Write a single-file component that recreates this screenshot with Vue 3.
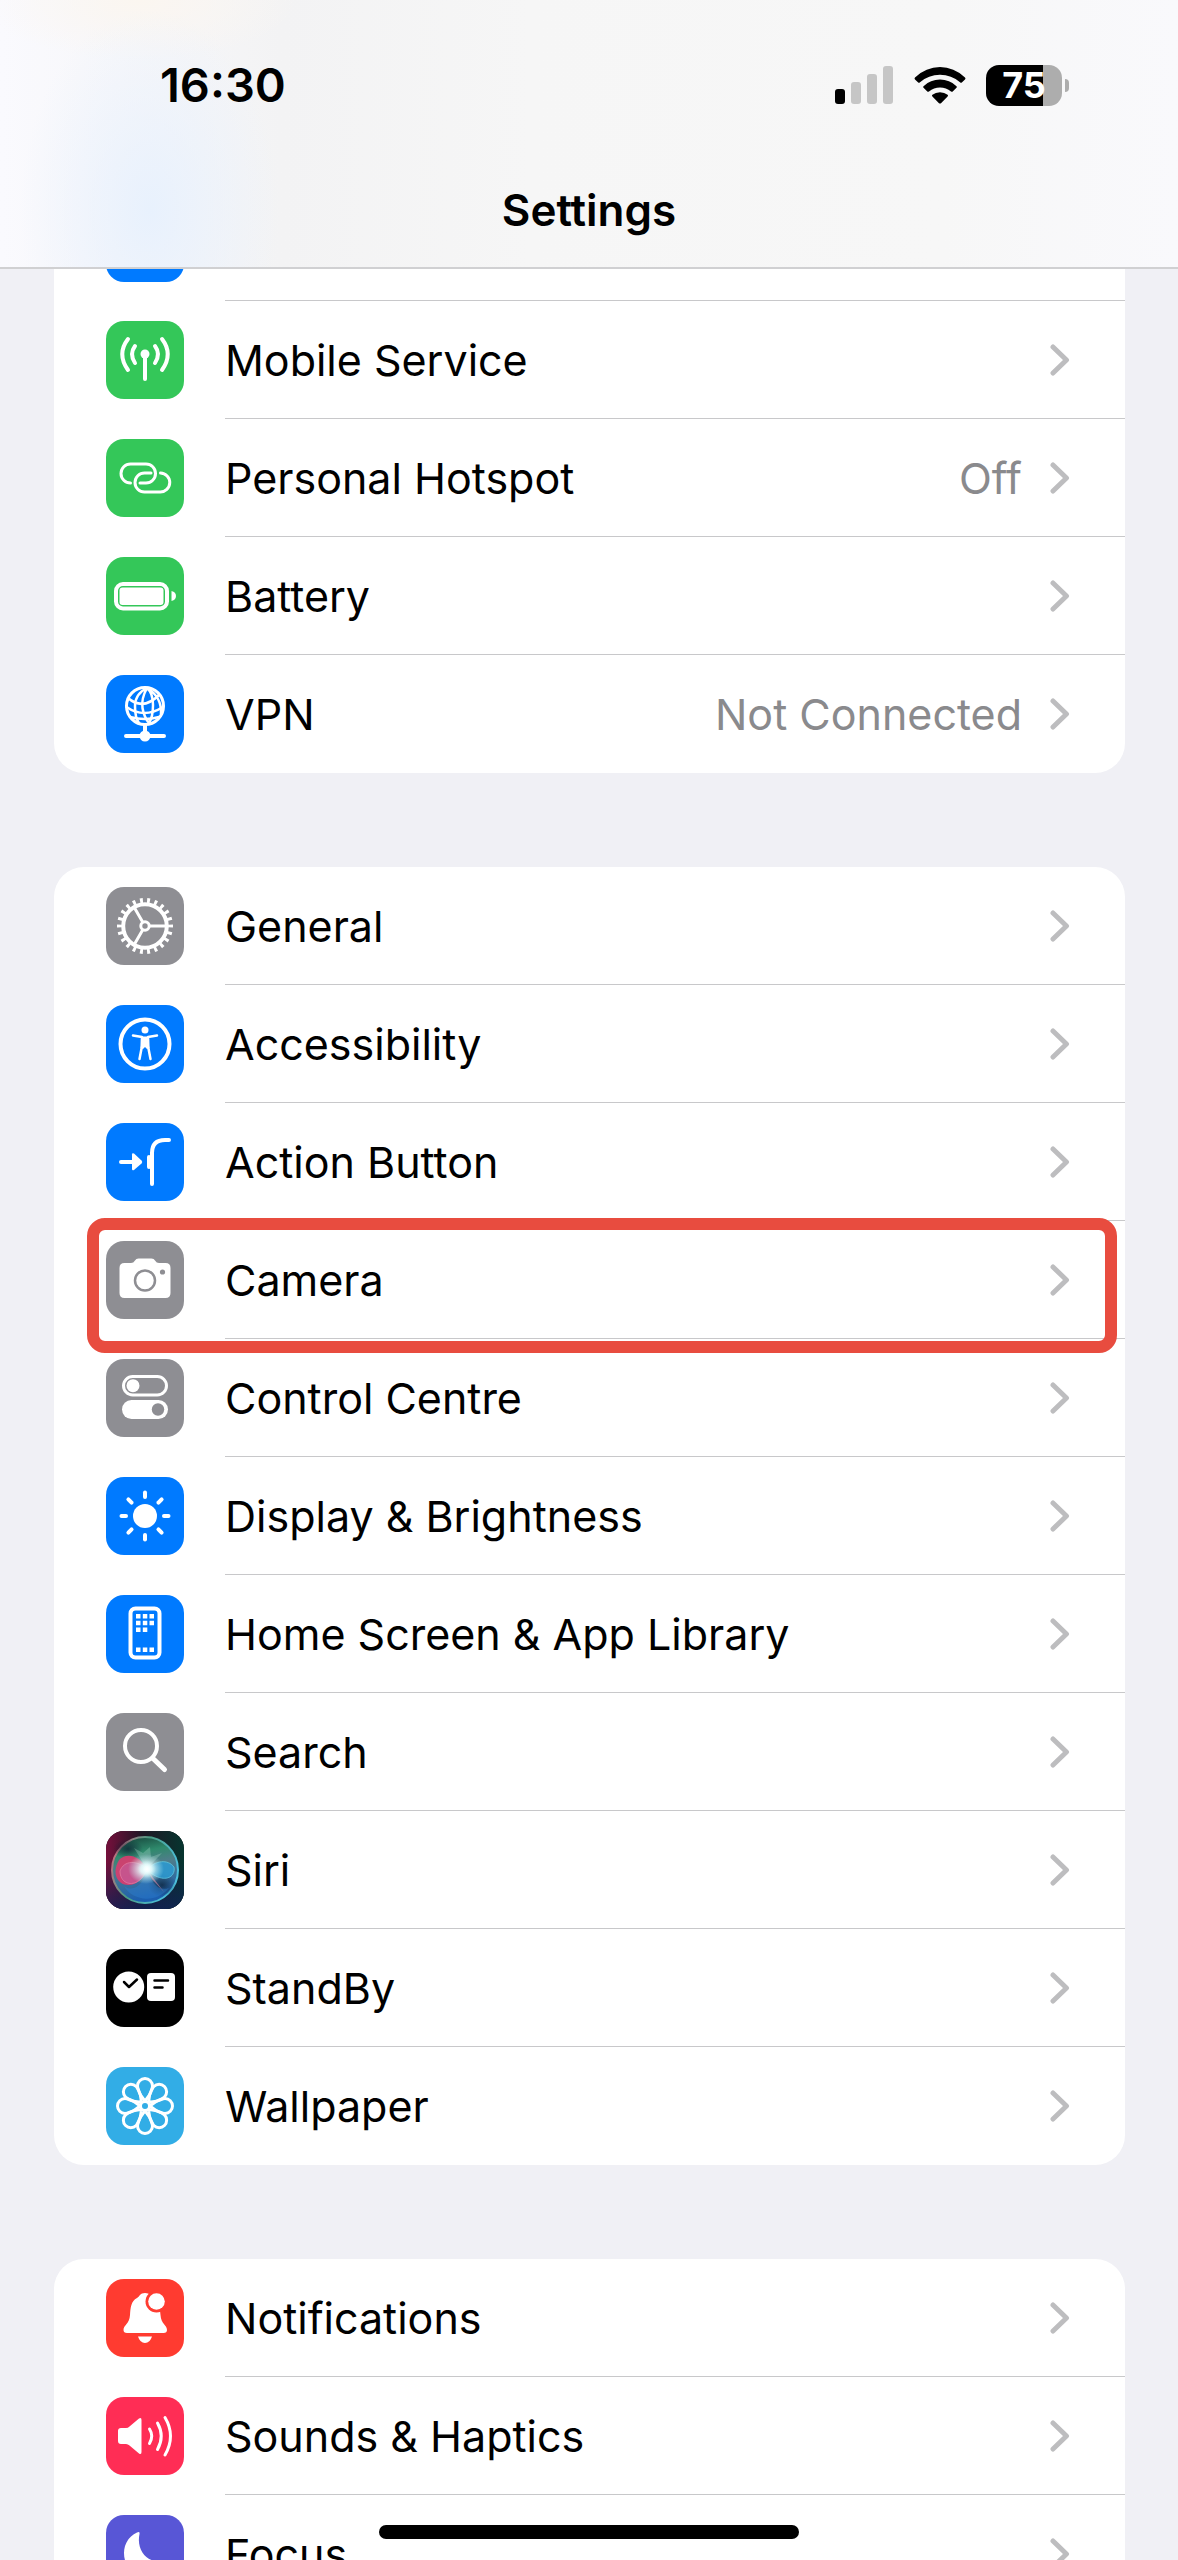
<template>
  <div class="screen">
    <header class="top-bar">
      <div class="status-bar">
        <time class="clock">16:30</time>
        <div class="indicators">
          <svg class="signal" viewBox="0 0 59 38" aria-hidden="true">
            <rect x="0" y="23" width="10" height="15" rx="3" />
            <rect class="dim" x="16" y="16" width="10" height="22" rx="3" />
            <rect class="dim" x="32" y="8" width="10" height="30" rx="3" />
            <rect class="dim" x="48" y="0" width="10" height="38" rx="3" />
          </svg>
          <svg class="wifi" viewBox="0 0 52 38" aria-hidden="true">
            <path d="M1 11.5Q0 12.5 1 13.5L4.200 16.500Q5 17.200 6 16.300Q14.500 8.800 26 8.800T46 16.300Q47 17.200 47.800 16.500L51 13.500Q52 12.500 51 11.500Q40 1 26 1T1 11.500Z" />
            <path d="M9.500 20.200Q8.700 21 9.500 21.800L13.300 25.500Q14 26.200 15 25.400Q19.800 21.400 26 21.400T37 25.400Q38 26.200 38.700 25.500L42.500 21.800Q43.300 21 42.500 20.200Q35.500 13.600 26 13.600T9.500 20.200Z" />
            <path d="M18.400 28.800Q17.500 29.600 18.400 30.500L25 37.200Q26 38 27 37.200L33.600 30.500Q34.500 29.600 33.600 28.800Q30.500 26.200 26 26.200T18.400 28.800Z" />
          </svg>
          <div class="battery"><span class="battery-level">75</span></div>
        </div>
      </div>
      <h1 class="title">Settings</h1>
    </header>

    <main class="content">
      <section v-for="(group, index) in groups" :key="index" class="group">
        <div v-if="index === 0" class="row-edge">
          <span class="icon blue"></span>
          <span class="row-edge-line"></span>
        </div>
        <a v-for="item in group" :key="item.icon" href="#" class="row" :class="{ marked: item.marked }">
          <span class="icon" :class="item.color">
            <svg viewBox="0 0 78 78" aria-hidden="true">
              <g v-if="item.icon === 'mobile'" class="line">
                <path d="M39 35V58" />
                <path d="M22 18Q10.500 33 22 49M29 25Q23 33 29 42M56 18Q67.500 33 56 49M49 25Q55 33 49 42" />
                <circle class="solid" cx="39" cy="33" r="4.500" />
              </g>
              <g v-else-if="item.icon === 'hotspot'" class="line mid">
                <path d="M24.500 44A9.500 9.500 0 0 1 24.500 25H40A9.500 9.500 0 0 1 40 44H34" />
                <path d="M45 34H38.500A9.500 9.500 0 0 0 38.500 53H54A9.500 9.500 0 0 0 54.500 34" />
              </g>
              <g v-else-if="item.icon === 'battery'">
                <rect class="line" x="10" y="27" width="51" height="24.500" rx="7" />
                <rect class="solid" x="13.500" y="30.500" width="44" height="17.500" rx="3" />
                <path class="solid" d="M65.500 34Q70 35 70 39T65.500 44Z" />
              </g>
              <g v-else-if="item.icon === 'vpn'" class="line">
                <circle class="mid" cx="39" cy="31" r="18.500" />
                <path class="fine" d="M41 13Q29 19 29 31T33 48M41 13Q35 24 36.500 33T43 48M41 13Q47 18 47 30T43 48M41 13Q56 22 55 39" />
                <path class="fine" d="M22 23Q37 36 53 20M20.500 32Q38 44 57 32M24 42Q39 46 53 42" />
                <path d="M39 50V56M20 61H58" />
                <circle class="solid" cx="39" cy="61" r="5.500" />
              </g>
              <g v-else-if="item.icon === 'general'" class="line">
                <circle cx="39" cy="39" r="21.800" />
                <circle class="teeth" cx="39" cy="39" r="25.500" pathLength="220" />
                <circle class="mid" cx="39" cy="39" r="4.200" />
                <path class="mid" d="M44 39H61M36.500 34.700L28 20M36.500 43.300L28 58" />
              </g>
              <g v-else-if="item.icon === 'accessibility'" class="line">
                <circle cx="39" cy="39" r="24.500" />
                <circle class="solid" cx="39" cy="25" r="3.500" />
                <path class="fine" d="M27 30.500L36 32V41L33.500 54M51 30.500L42 32V41L44.500 54" />
                <path class="solid" d="M35 31.500H43L43.500 43L41 44L39 42L37 44L34.500 43Z" />
              </g>
              <g v-else-if="item.icon === 'action'" class="line">
                <path d="M15 39H27M63 17H59Q46 17 46 30V61M43 34V44" />
                <path class="solid" d="M26 31.500Q26 29.500 28 30.500L35.500 37.500Q37 39 35.500 40.500L28 47Q26 48 26 46Z" />
              </g>
              <g v-else-if="item.icon === 'camera'">
                <path class="solid" d="M18.500 22H25Q27.500 22 29 19.500Q30 17.500 32.500 17.500H45.500Q48 17.500 49 19.500Q50.500 22 53 22H59.500Q64.500 22 64.500 27V52Q64.500 57 59.500 57H18.500Q13.500 57 13.500 52V27Q13.500 22 18.500 22Z" />
                <circle class="cut-line" cx="39" cy="39.500" r="10" />
                <circle class="cut" cx="56.500" cy="31" r="2.600" />
              </g>
              <g v-else-if="item.icon === 'control'">
                <rect class="line mid" x="17.500" y="17.500" width="43" height="18.500" rx="9.250" />
                <circle class="solid" cx="27" cy="26.700" r="6.500" />
                <rect class="solid" x="16" y="41" width="46" height="19" rx="9.500" />
                <circle class="cut" cx="52" cy="50.500" r="6.200" />
              </g>
              <g v-else-if="item.icon === 'display'" class="line">
                <circle class="solid" cx="39" cy="39" r="12" />
                <path v-for="n in 8" :key="n" d="M39 15.500V20" :transform="`rotate(${n * 45} 39 39)`" />
              </g>
              <g v-else-if="item.icon === 'home'">
                <rect class="line" x="24.500" y="13.500" width="29" height="49" rx="5" />
                <path class="solid" d="M30 19h4.500v4.500h-4.500zM36.800 19h4.500v4.500h-4.500zM43.500 19h4.500v4.500h-4.500zM30 25.800h4.500v4.500h-4.500zM36.800 25.800h4.500v4.500h-4.500zM43.500 25.800h4.500v4.500h-4.500zM30 32.500h4.500v4.500h-4.500zM36.800 32.500h4.500v4.500h-4.500zM30 52.500h4.500v4.500h-4.500zM36.800 52.500h4.500v4.500h-4.500zM43.500 52.500h4.500v4.500h-4.500z" />
              </g>
              <g v-else-if="item.icon === 'search'" class="line">
                <circle cx="35" cy="33" r="16" />
                <path class="thick" d="M47 45.500L58.500 56.500" />
              </g>
              <g v-else-if="item.icon === 'siri'">
                <defs>
                  <linearGradient id="siri-back" x1="0" y1="0" x2="1" y2="0">
                    <stop offset="0" stop-color="#76103c" />
                    <stop offset="0.45" stop-color="#211625" />
                    <stop offset="1" stop-color="#06352f" />
                  </linearGradient>
                  <linearGradient id="siri-floor" x1="0" y1="0" x2="0" y2="1">
                    <stop offset="0.4" stop-color="#102050" stop-opacity="0" />
                    <stop offset="1" stop-color="#102258" stop-opacity="0.8" />
                  </linearGradient>
                  <linearGradient id="siri-rim" x1="0" y1="0" x2="1" y2="0.4">
                    <stop offset="0" stop-color="#e0647f" />
                    <stop offset="0.5" stop-color="#4a9c84" />
                    <stop offset="1" stop-color="#4cc0dc" />
                  </linearGradient>
                  <linearGradient id="siri-ball" x1="0" y1="0" x2="0.2" y2="1">
                    <stop offset="0" stop-color="#123a34" />
                    <stop offset="0.3" stop-color="#2f8a6c" />
                    <stop offset="0.5" stop-color="#4f7d8a" />
                    <stop offset="1" stop-color="#1c5fb0" />
                  </linearGradient>
                  <radialGradient id="siri-shade">
                    <stop offset="0" stop-color="#0a1c30" stop-opacity="0.7" />
                    <stop offset="1" stop-color="#0a1c30" stop-opacity="0" />
                  </radialGradient>
                  <radialGradient id="siri-glow">
                    <stop offset="0" stop-color="#fff" />
                    <stop offset="0.3" stop-color="#f2ffff" stop-opacity="0.9" />
                    <stop offset="1" stop-color="#b8f0f0" stop-opacity="0" />
                  </radialGradient>
                </defs>
                <rect width="78" height="78" fill="url(#siri-back)" />
                <rect width="78" height="78" fill="url(#siri-floor)" />
                <circle cx="39" cy="39" r="33" fill="url(#siri-ball)" stroke="url(#siri-rim)" stroke-width="2" />
                <ellipse cx="56" cy="54" rx="14" ry="12" fill="url(#siri-shade)" />
                <ellipse cx="22" cy="18" rx="15" ry="10" fill="url(#siri-shade)" />
                <path d="M41 38C34 24 20 21 13 29C5 43 12 54 22 54C32 54 38 46 41 38Z" fill="#d93c6e" opacity="0.9" />
                <path d="M41 38C31 29 18 29 14 40C14 56 34 58 41 38Z" fill="#c4609f" stroke="#f0a0c4" stroke-width="0.8" opacity="0.6" />
                <path d="M41 39C49 29 62 28 68 36C70 46 58 54 41 39Z" fill="#2d9bd2" stroke="#65d6ec" stroke-width="0.8" opacity="0.85" />
                <path d="M41 39C36 57 25 61 18 55C27 71 51 72 63 57C51 61 45 50 41 39Z" fill="#2c7fd0" opacity="0.45" />
                <path d="M42 40L58 61L46 48Z" fill="#e88ba5" opacity="0.6" />
                <path d="M41 38L28 17L37 22L44 16L45 26L56 22Z" fill="#c8efe2" opacity="0.25" />
                <ellipse cx="40" cy="38" rx="18" ry="15" fill="url(#siri-glow)" />
                <circle cx="41" cy="38" r="9" fill="url(#siri-glow)" />
              </g>
              <g v-else-if="item.icon === 'standby'">
                <circle class="solid" cx="22.700" cy="38" r="15.500" />
                <rect class="solid" x="41" y="24" width="28" height="28" rx="4" />
                <path class="cut-line" d="M18 33L23 38L31 30.500M48.500 31.500H62M48.500 38.500H56.500" />
              </g>
              <g v-else-if="item.icon === 'wallpaper'" class="line mid">
                <path v-for="n in 8" :key="n" d="M42 37C35 30 31.500 24 31.500 19A7.500 7.500 0 0 1 46.500 19C46.500 24 43 30 36 37" :transform="`rotate(${n * 45} 39 39)`" />
                <circle class="hub" cx="39" cy="39" r="4.500" />
              </g>
              <g v-else-if="item.icon === 'notifications'">
                <path class="solid" d="M39 14C34 14 34 17 31 19C25 22 24.500 29 24 36C23.500 45 17.500 46 17.500 51Q17.500 54 21 54H57.500Q61 54 61 51C61 46 55 45 54.500 36C54 29 53 22 47 19C44 17 44 14 39 14ZM32 57.500H46Q44 64 39 64T32 57.500Z" />
                <circle class="cut" cx="50.500" cy="22.500" r="11" />
                <circle class="solid" cx="50.500" cy="22.500" r="8.300" />
              </g>
              <g v-else-if="item.icon === 'sounds'" class="line mid">
                <path class="solid" d="M15 31H20Q22 31 23.500 29.500L33 21.500Q35.500 20 35.500 23V55Q35.500 58 33 56.500L23.500 48.500Q22 47 20 47H15Q12 47 12 44V34Q12 31 15 31Z" />
                <path d="M43.500 32Q48 39 43.500 46.500M51.500 26Q59 39 51.500 52.500M59 20.500Q70 39 59 58" />
              </g>
              <g v-else-if="item.icon === 'focus'">
                <path class="solid" d="M31 17.500Q34 16 33.500 19C30 36 42 49 56 45.500Q60 44 59 47C52 66 18 64 18 38C18 29 23 21 31 17.500Z" />
              </g>
            </svg>
          </span>
          <span class="row-body">
            <span class="label">{{ item.label }}</span>
            <span v-if="item.value" class="value">{{ item.value }}</span>
            <svg class="chevron" viewBox="0 0 20 32" aria-hidden="true">
              <path d="M3 3L16.500 16L3 29" />
            </svg>
          </span>
        </a>
      </section>
    </main>

    <div class="home-indicator"></div>
  </div>
</template>

<script setup>
const groups = [
  [
    { icon: 'mobile', label: 'Mobile Service', color: 'green' },
    { icon: 'hotspot', label: 'Personal Hotspot', color: 'green', value: 'Off' },
    { icon: 'battery', label: 'Battery', color: 'green' },
    { icon: 'vpn', label: 'VPN', color: 'blue', value: 'Not Connected' }
  ],
  [
    { icon: 'general', label: 'General', color: 'gray' },
    { icon: 'accessibility', label: 'Accessibility', color: 'blue' },
    { icon: 'action', label: 'Action Button', color: 'blue' },
    { icon: 'camera', label: 'Camera', color: 'gray', marked: true },
    { icon: 'control', label: 'Control Centre', color: 'gray' },
    { icon: 'display', label: 'Display & Brightness', color: 'blue' },
    { icon: 'home', label: 'Home Screen & App Library', color: 'blue' },
    { icon: 'search', label: 'Search', color: 'gray' },
    { icon: 'siri', label: 'Siri', color: 'black' },
    { icon: 'standby', label: 'StandBy', color: 'black' },
    { icon: 'wallpaper', label: 'Wallpaper', color: 'cyan' }
  ],
  [
    { icon: 'notifications', label: 'Notifications', color: 'red' },
    { icon: 'sounds', label: 'Sounds & Haptics', color: 'pink' },
    { icon: 'focus', label: 'Focus', color: 'indigo' }
  ]
]
</script>

<style>
body {
  background: #f0f0f5;
}
</style>

<style scoped>
.screen {
  position: relative;
  display: flex;
  flex-direction: column;
  height: 100vh;
  overflow: hidden;
  background: #f0f0f5;
  color: #000;
  font-family: Inter, "Liberation Sans", sans-serif;
}
.top-bar {
  flex: none;
  border-bottom: 2px solid #d0d0d2;
  background:
    radial-gradient(ellipse 130px 200px at 150px 210px, #e8f1fd, transparent),
    radial-gradient(ellipse 160px 60px at 140px 0, #fbf6f0, transparent),
    linear-gradient(90deg, #fafafe, #f3f3f4 24%, #f6f6f6 45%, #f7f7f7 80%, #f9f9fc);
}
.status-bar {
  display: flex;
  align-items: center;
  justify-content: space-between;
  padding: 56px 108px 0 160px;
}
.clock {
  font-size: 47px;
  line-height: 58px;
  font-weight: 600;
}
.indicators {
  display: flex;
  align-items: center;
  gap: 20px;
}
.signal { width: 59px; height: 38px; }
.signal .dim { fill: #c6c6c6; }
.wifi { width: 52px; height: 38px; }
.battery {
  position: relative;
  width: 76px;
  height: 41px;
  margin-right: 8px;
  border-radius: 13px;
  background: linear-gradient(90deg, #000 75%, #adadad 75%);
  text-align: center;
}
.battery::after {
  content: "";
  position: absolute;
  left: 79px;
  top: 14px;
  width: 4px;
  height: 13px;
  border-radius: 0 4px 4px 0;
  background: #adadad;
}
.battery-level {
  color: #fff;
  font-size: 36px;
  line-height: 41px;
  font-weight: 700;
}
.title {
  margin: 0;
  padding: 67px 0 28px;
  font-size: 44px;
  line-height: 58px;
  font-weight: 600;
  text-align: center;
}
.content {
  flex: 1;
  min-height: 0;
  overflow: hidden;
  padding: 0 53px 0 54px;
}
.group {
  margin-bottom: 94px;
  border-radius: 30px;
  background: #fff;
}
.group:first-child { border-radius: 0 0 30px 30px; }
.row-edge {
  display: flex;
  align-items: flex-end;
  gap: 41px;
  height: 32px;
  padding-left: 52px;
  overflow: hidden;
}
.row-edge .icon { margin-bottom: 19px; }
.row-edge-line {
  flex: 1;
  border-bottom: 1px solid #c8c8ca;
}
.row {
  position: relative;
  display: flex;
  align-items: center;
  gap: 41px;
  height: 118px;
  padding-left: 52px;
  color: inherit;
  text-decoration: none;
}
.row.marked::after {
  content: "";
  position: absolute;
  z-index: 1;
  inset: -3px 8px -14px 33px;
  border: 12px solid #e84c3f;
  border-radius: 18px;
}
.icon {
  flex: none;
  width: 78px;
  height: 78px;
  border-radius: 18px;
  overflow: hidden;
  background: var(--tile);
}
.icon svg { display: block; }
.green { --tile: #34c759; }
.blue { --tile: #007aff; }
.gray { --tile: #8e8e93; }
.black { --tile: #000; }
.cyan { --tile: #32ade6; }
.red { --tile: #ff3b30; }
.pink { --tile: #ff2d55; }
.indigo { --tile: #5856d6; }
.line {
  fill: none;
  stroke: #fff;
  stroke-width: 4;
  stroke-linecap: round;
  stroke-linejoin: round;
}
.mid { stroke-width: 3; }
.fine { stroke-width: 2.5; }
.thick { stroke-width: 5; }
.solid { fill: #fff; stroke: none; }
.cut { fill: var(--tile); stroke: none; }
.hub { fill: var(--tile); }
.cut-line {
  fill: none;
  stroke: var(--tile);
  stroke-width: 2.5;
  stroke-linecap: round;
  stroke-linejoin: round;
}
.teeth {
  stroke-width: 5;
  stroke-linecap: butt;
  stroke-dasharray: 4 6;
  stroke-dashoffset: 2;
}
.row-body {
  flex: 1;
  align-self: stretch;
  display: flex;
  align-items: center;
  padding-right: 55px;
  border-bottom: 1px solid #c8c8ca;
}
.row:last-child .row-body { border-bottom-color: transparent; }
.label {
  flex: 1;
  font-size: 43px;
  line-height: 58px;
}
.value {
  margin-right: 28px;
  color: #8a8a8d;
  font-size: 43px;
  line-height: 58px;
}
.chevron {
  width: 20px;
  height: 32px;
  fill: none;
  stroke: #bdbdbf;
  stroke-width: 5;
  stroke-linecap: round;
  stroke-linejoin: round;
}
.home-indicator {
  position: absolute;
  z-index: 2;
  left: 50%;
  bottom: 21px;
  width: 420px;
  height: 14px;
  border-radius: 7px;
  background: #000;
  transform: translateX(-50%);
}
</style>
